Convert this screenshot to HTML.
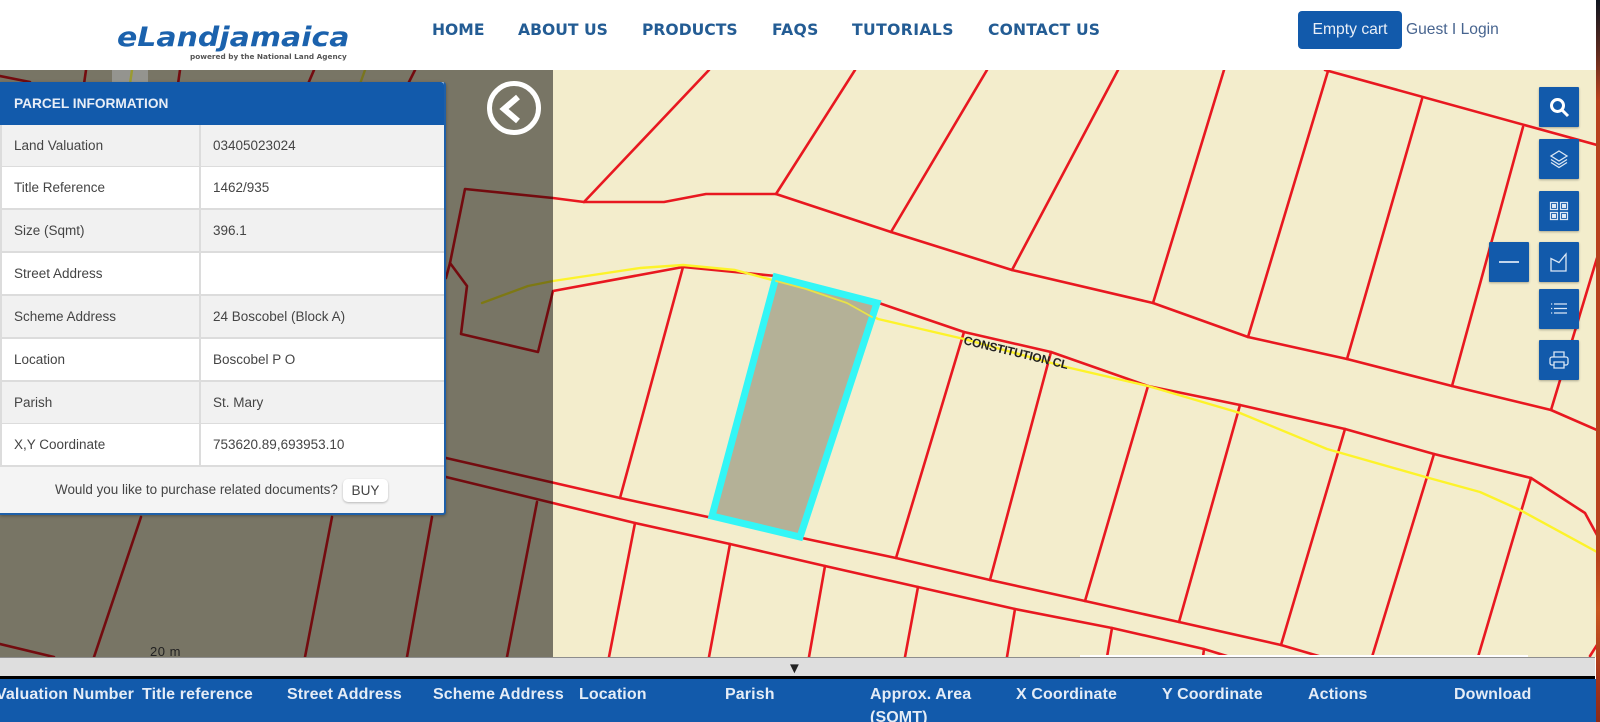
<!DOCTYPE html>
<html lang="en"><head><meta charset="utf-8"><title>eLandjamaica</title>
<style>
html,body{margin:0;padding:0;background:#fff}
#p{position:relative;width:1600px;height:722px;overflow:hidden;font-family:"Liberation Sans",Arial,sans-serif;background:#fff;filter:blur(.3px)}
.a{position:absolute;white-space:nowrap}
.nav{top:20px;font:bold 15.6px/20px "DejaVu Sans",sans-serif;color:#235c94}
#map{position:absolute;left:0;top:0;width:1600px;height:722px}
#panel{position:absolute;left:0;top:82px;width:444px;height:431px;background:#f4f4f4;border:solid #1e5fa8;border-width:0 2px 2px 0;border-radius:0 3px 3px 0;box-shadow:0 1px 3px rgba(0,0,0,.3)}
#ph{height:43px;background:#125aab;color:#e8eef7;font:bold 13.7px/44px "Liberation Sans",sans-serif;padding-left:14px;border-radius:0 3px 0 0}
.r{position:absolute;left:0;width:444px;height:41px;border-bottom:2px solid #dcdcdc;font-size:13.5px;line-height:41px;color:#444}
.r b{font-weight:normal;position:absolute;left:0;top:0;width:201px;height:41px;padding-left:14px;box-sizing:border-box;border-right:2px solid #dcdcdc;border-left:2px solid #dcdcdc;text-indent:-2px}
.r i{font-style:normal;position:absolute;left:213px;top:0}
.g{background:#f1f1f1}.w{background:#fff}
.b{position:absolute;width:40px;height:40px;background:#125aab;border-radius:1px;box-shadow:0 1px 2px rgba(0,0,0,.3)}
.b svg{display:block;width:40px;height:40px;fill:none;stroke:#dbe7f5;stroke-width:1.3}
.th{top:685px;font:bold 16px/20px "Liberation Sans",sans-serif;letter-spacing:.12px;color:#e4ecf6}
</style></head><body><div id="p">

<svg id="map" viewBox="0 0 1600 722" fill="none" stroke-linejoin="round" stroke-linecap="round">
<defs><clipPath id="mc"><rect x="0" y="70" width="1597" height="587"/></clipPath></defs>
<g clip-path="url(#mc)">
<rect x="0" y="70" width="1600" height="587" fill="#f3edcc"/>
<g stroke="#e81820" stroke-width="2.6">
<path d="M0 76L30 82M86 70L84 84M180 70L178 84M314 70L308 84M415 70L408 84"/>
<path d="M141 517L94 657M332 517L305 657M432 517L407 657M537 502L507 657M0 644L54 657"/>
<path d="M446 278L450 263L465 189L553 198L584 202L664 202L706 194L776 194L891 232L1012 270L1153 303L1248 337L1347 359L1452 386L1551 410L1597 430"/>
<path d="M584 202L709 70M776 194L855 70M891 232L987 70M1012 270L1118 70M1153 303L1224 70M1248 337L1328 71M1347 359L1422 99M1452 386L1523 127M1551 410L1597 258M1325 70L1597 145"/>
<path d="M450 263L467 286L461 334L538 352L553 291L683 267L776 276L876 302L964 332L1051 352L1148 386L1240 405L1345 429L1434 454L1531 478L1585 513L1597 535"/>
<path d="M683 267L620 498M964 332L896 558M1051 352L990 580M1148 386L1085 601M1240 405L1179 622M1345 429L1281 645M1434 454L1372 657M1531 478L1478 657M1590 656L1597 645"/>
<path d="M446 458L620 498L708 517L802 538L896 558L990 580L1085 601L1179 622L1281 645L1322 657"/>
<path d="M446 477L635 523L730 544L825 566L918 587L1015 609L1112 628L1204 649L1230 657"/>
<path d="M635 523L609 657M730 544L709 657M825 566L809 657M918 587L905 657M1015 609L1007 657M1112 628L1107 657M1204 649L1203 657"/>
</g>
<path d="M365 70L360 84" stroke="#f5ec40" stroke-width="2.4"/>
<path d="M482 303L528 286L553 281L640 268L683 265L735 270L806 289L847 303L878 319L964 339L1066 367L1148 386L1240 413L1327 449L1429 478L1480 492L1520 510L1597 552" stroke="#fdf32a" stroke-width="2.4"/>
<polygon points="776,277 877,303 800,537 712,516" fill="#b0ae94" fill-opacity=".95" stroke="#33f6f6" stroke-width="7" stroke-linejoin="miter"/>
<path d="M776 281L806 289L847 303L872 317" stroke="#e8e14a" stroke-width="1.8"/>
<text x="0" y="0" transform="translate(963 344) rotate(13.5)" font-family="Liberation Sans" font-weight="bold" font-size="12" letter-spacing="-.15" fill="#222" stroke="none">CONSTITUTION CL</text>
<rect x="0" y="70" width="553" height="587" fill="#000" fill-opacity=".505"/>
<rect x="112" y="70" width="36" height="14" fill="#94948f"/>
<path d="M132 70L130 84" stroke="#9a9a30" stroke-width="2.4"/>
<circle cx="514" cy="108" r="24.500" stroke="#fff" stroke-width="5"/>
<path d="M518 97L504 109L518 121" stroke="#fff" stroke-width="6" stroke-linecap="butt" stroke-linejoin="miter"/>
<text x="150" y="656" font-family="Liberation Sans" font-size="13" letter-spacing=".5" fill="#222" stroke="none">20 m</text>
<rect x="1080" y="655" width="448" height="2" fill="#fff"/>
</g>
</svg>

<div class="a" style="left:1596px;top:0;width:4px;height:722px;background:linear-gradient(#10151f 0,#5a2a20 50px,#b8401c 100px,#b8401c 560px,#c9571f 610px,#a5331a 680px,#8a2a18 722px)"></div>

<div class="a" style="left:117px;top:18px;font:italic bold 26.5px/40px 'DejaVu Sans',sans-serif;color:#1b62ad;transform:scaleX(1.13);transform-origin:0 0">eLandjamaica</div>
<div class="a" style="left:190px;top:52px;font:bold 7.3px/10px 'DejaVu Sans',sans-serif;color:#555">powered by the National Land Agency</div>
<div class="a nav" style="left:432px">HOME</div>
<div class="a nav" style="left:518px">ABOUT US</div>
<div class="a nav" style="left:642px">PRODUCTS</div>
<div class="a nav" style="left:772px;letter-spacing:.3px">FAQS</div>
<div class="a nav" style="left:852px;letter-spacing:.4px">TUTORIALS</div>
<div class="a nav" style="left:988px;letter-spacing:.15px">CONTACT US</div>
<div class="a" style="left:1298px;top:11px;width:104px;height:38px;background:#125aab;border-radius:4px;color:#e8eef7;font-size:15.7px;line-height:38px;text-align:center">Empty cart</div>
<div class="a" style="left:1406px;top:19px;font-size:15.6px;line-height:22px;color:#47648f">Guest I Login</div>

<div id="panel">
<div id="ph">PARCEL INFORMATION</div>
<div class="r g" style="top:42.6px"><b>Land Valuation</b><i>03405023024</i></div>
<div class="r w" style="top:85px"><b>Title Reference</b><i>1462/935</i></div>
<div class="r g" style="top:128.3px"><b>Size (Sqmt)</b><i>396.1</i></div>
<div class="r w" style="top:171.2px"><b>Street Address</b><i></i></div>
<div class="r g" style="top:214px"><b>Scheme Address</b><i>24 Boscobel (Block A)</i></div>
<div class="r w" style="top:256.9px"><b>Location</b><i>Boscobel P O</i></div>
<div class="r g" style="top:299.8px"><b>Parish</b><i>St. Mary</i></div>
<div class="r w" style="top:342px"><b>X,Y Coordinate</b><i>753620.89,693953.10</i></div>
<div class="a" style="left:55px;top:398px;font-size:13.45px;line-height:20px;color:#444">Would you like to purchase related documents?</div>
<div class="a" style="left:343px;top:397px;width:45px;height:23px;background:#fff;border-radius:5px;box-shadow:0 1px 2px rgba(0,0,0,.25);font-size:13.6px;line-height:23px;text-align:center;color:#444">BUY</div>
</div>

<div class="b" style="left:1539px;top:87px"><svg viewBox="0 0 40 40"><circle cx="18.500" cy="18.500" r="6" style="stroke:#fff;stroke-width:3"/><path d="M23 23L29 29" style="stroke:#fff;stroke-width:3"/></svg></div>
<div class="b" style="left:1539px;top:139px"><svg viewBox="0 0 40 40"><path d="M20 12L28 17L20 22L12 17Z M12 20.500L20 25.500L28 20.500 M12 23.500L20 28.500L28 23.500"/></svg></div>
<div class="b" style="left:1539px;top:191px"><svg viewBox="0 0 40 40"><path d="M11.500 11.500h7v7h-7z M21.500 11.500h7v7h-7z M11.500 21.500h7v7h-7z M21.500 21.500h7v7h-7z" style="stroke-width:1.200"/><path d="M13.500 13.500h3v3h-3zM23.500 13.500h3v3h-3zM13.500 23.500h3v3h-3zM23.500 23.500h3v3h-3z" style="stroke-width:1;fill:#dbe7f5"/></svg></div>
<div class="b" style="left:1489px;top:242px"><svg viewBox="0 0 40 40"><path d="M10 20H30" style="stroke-width:1.800"/></svg></div>
<div class="b" style="left:1539px;top:242px"><svg viewBox="0 0 40 40"><path d="M12 16.500V29H27V12L20 20.500Z"/></svg></div>
<div class="b" style="left:1539px;top:289px"><svg viewBox="0 0 40 40"><path d="M15 15H28M15 19.500H28M15 24H28M12 15h1.200M12 19.500h1.200M12 24h1.200"/></svg></div>
<div class="b" style="left:1539px;top:340px"><svg viewBox="0 0 40 40"><path d="M15 17V12H25V17M15 25H13A2 2 0 0 1 11 23V19A2 2 0 0 1 13 17H27A2 2 0 0 1 29 19V23A2 2 0 0 1 27 25H25M15 22H25V28H15Z"/></svg></div>

<div class="a" style="left:0;top:657px;width:1595px;height:20px;background:#dedede;border-top:1px solid #8d8d8d;box-sizing:border-box;border-bottom:1px solid #333"></div>
<div class="a" style="left:0;top:676px;width:1595px;height:3px;background:#000"></div>
<div class="a" style="left:787px;top:661px;font-size:15px;line-height:16px;color:#222">▼</div>
<div class="a" style="left:0;top:679px;width:1596px;height:43px;background:#125aab"></div>

<div class="a th" style="left:-4px">Valuation Number</div>
<div class="a th" style="left:142px">Title reference</div>
<div class="a th" style="left:287px">Street Address</div>
<div class="a th" style="left:433px">Scheme Address</div>
<div class="a th" style="left:579px">Location</div>
<div class="a th" style="left:725px">Parish</div>
<div class="a th" style="left:870px">Approx. Area<br><span style="line-height:26px">(SQMT)</span></div>
<div class="a th" style="left:1016px">X Coordinate</div>
<div class="a th" style="left:1162px">Y Coordinate</div>
<div class="a th" style="left:1308px">Actions</div>
<div class="a th" style="left:1454px">Download</div>
</div></body></html>
